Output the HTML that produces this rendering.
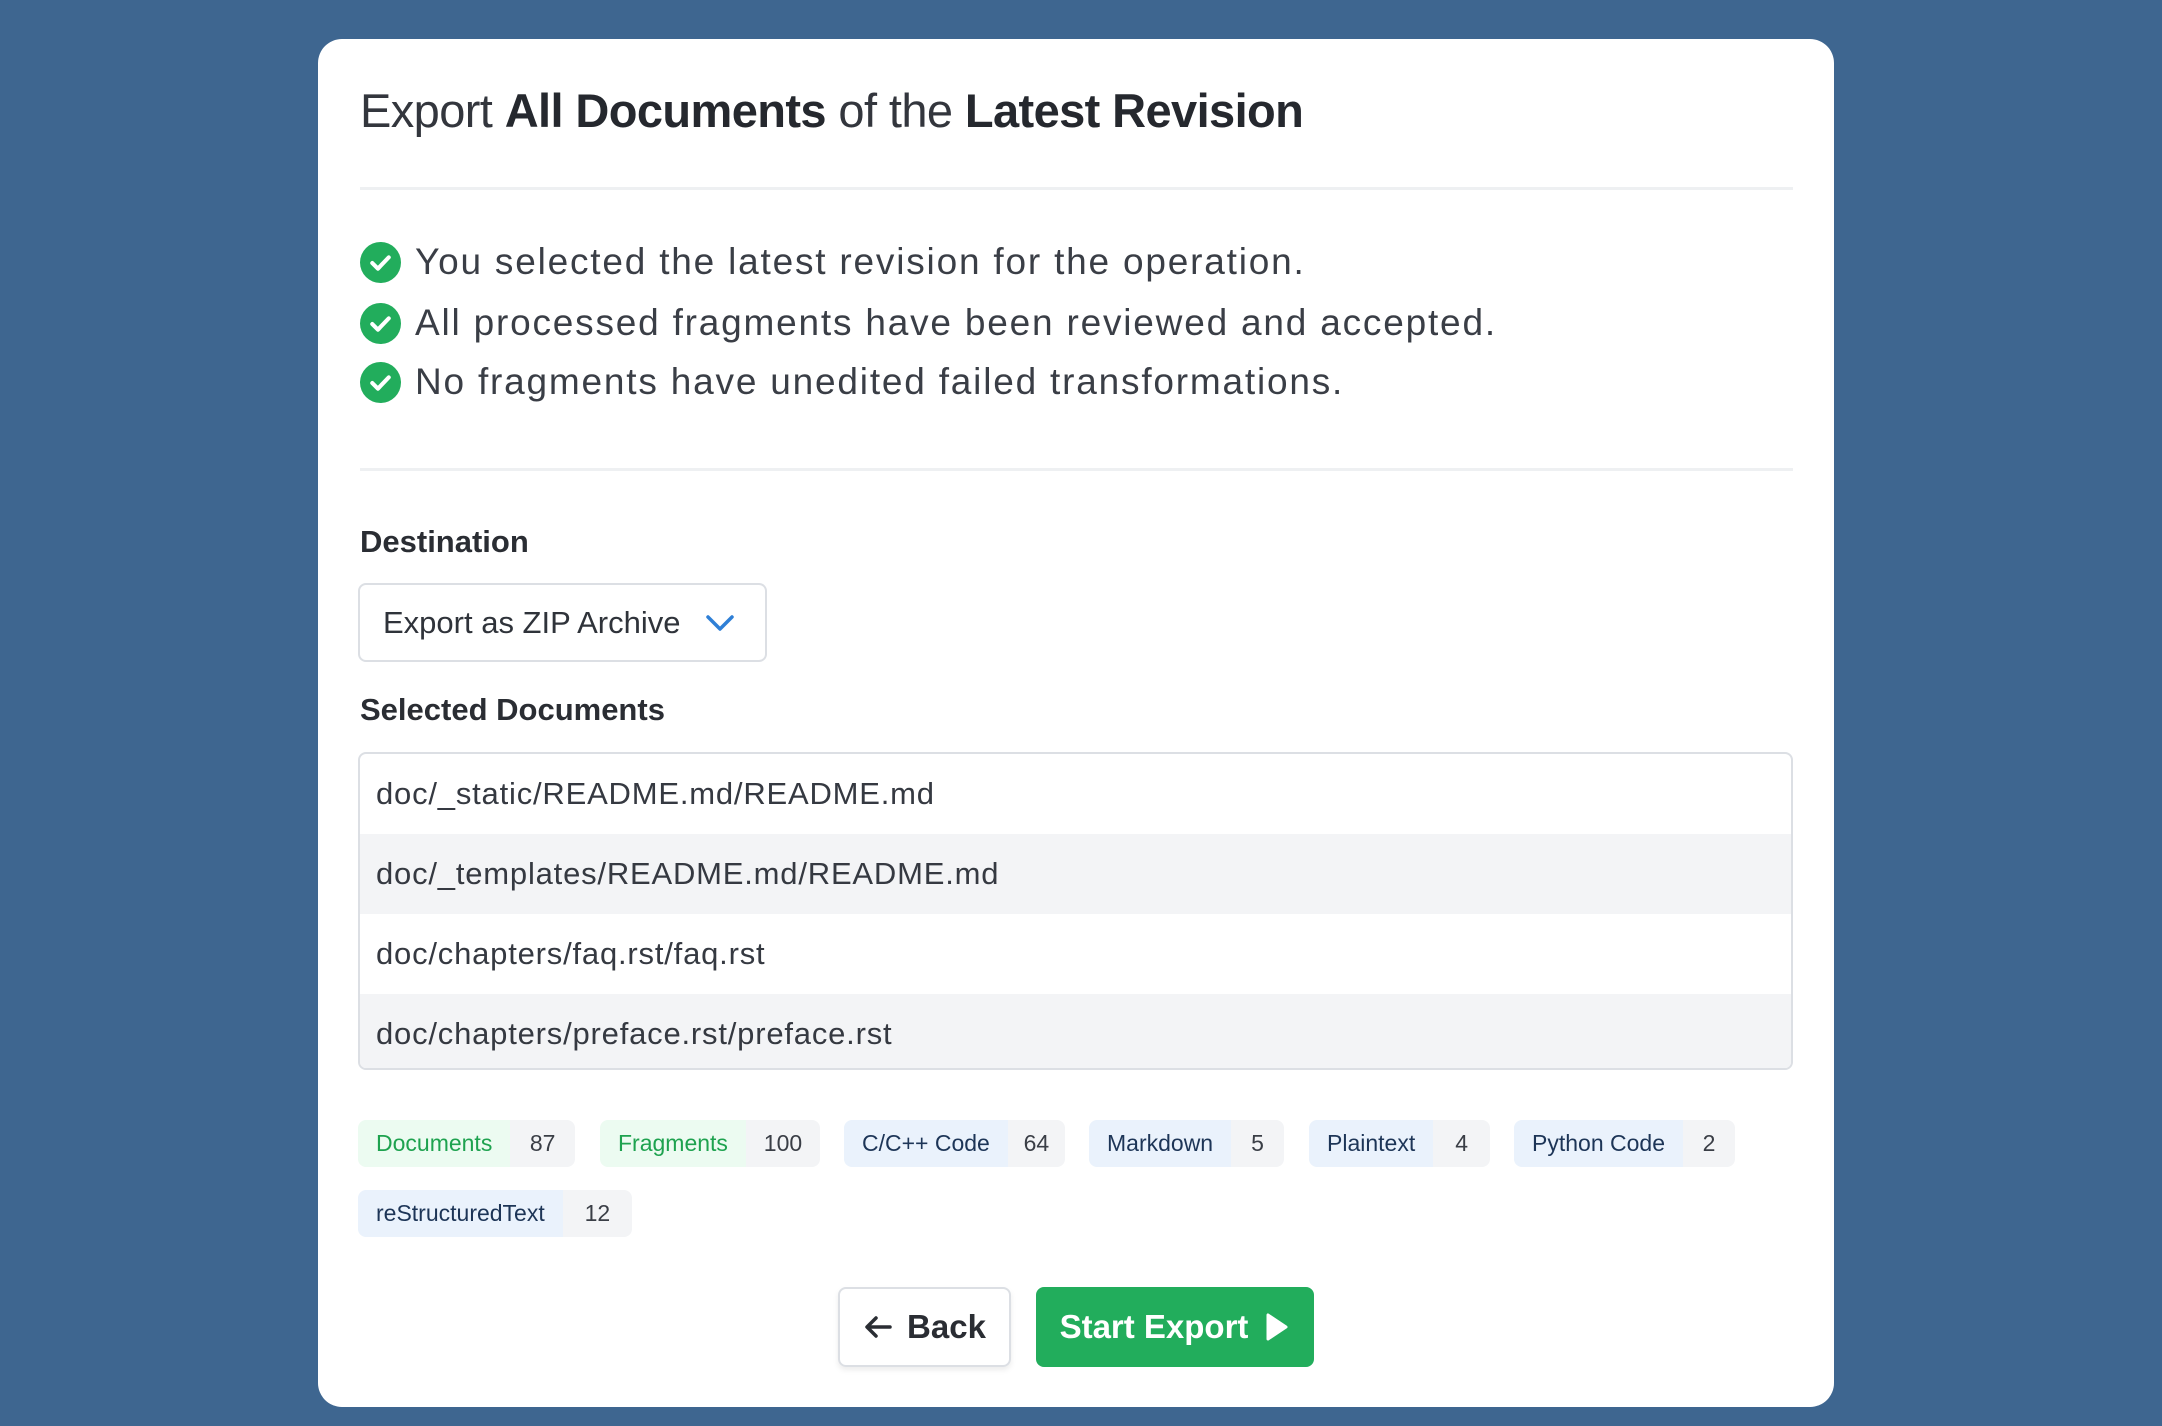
<!DOCTYPE html>
<html><head><meta charset="utf-8"><style>
*{margin:0;padding:0;box-sizing:border-box}
body{width:2162px;height:1426px;background:#3e6690;font-family:"Liberation Sans",sans-serif;color:#2d3139;position:relative;overflow:hidden}
.card{position:absolute;left:318px;top:39px;width:1516px;height:1368px;background:#fff;border-radius:24px}
.a{position:absolute;white-space:nowrap}
.title{left:42px;top:44px;font-size:47px;color:#33363d;letter-spacing:-0.6px}
.title b{color:#25282e}
.hr{position:absolute;left:42px;width:1433px;height:3px;background:#eef0f2}
.chk{left:42px;font-size:37px;color:#3a3e46;letter-spacing:1.8px;display:flex;align-items:center;height:50px}
.chk svg{margin-right:14px}
.lbl{left:42px;font-size:31px;font-weight:bold;color:#2a2d33}
.sel{left:40px;top:544px;width:409px;height:79px;border:2px solid #dcdfe4;border-radius:8px;font-size:31px;padding-left:23px;display:flex;align-items:center;color:#2f333a}
.list{left:40px;top:713px;width:1435px;height:318px;border:2px solid #dcdfe4;border-radius:8px;overflow:hidden}
.row{height:80px;display:flex;align-items:center;padding-left:16px;font-size:31px;color:#353941;letter-spacing:0.8px}
.row.g{background:#f3f4f6}
.tag{position:absolute;height:47px;border-radius:8px;display:flex;font-size:23px;overflow:hidden}
.tag span{display:flex;align-items:center;padding:0 18px}
.tag .n{background:#f3f4f6;color:#3a3e46;flex:1;justify-content:center;padding:0}
.gr span:first-child{background:#ecfbf1;color:#1ea24f}
.bl span:first-child{background:#eaf2fc;color:#1d3557}
.btn{position:absolute;top:1248px;height:80px;border-radius:8px;font-size:33px;font-weight:bold;display:flex;align-items:center;justify-content:center}
</style></head><body>
<div class="card">
<div class="a title">Export <b>All Documents</b> of the <b>Latest Revision</b></div>
<div class="hr" style="top:148px"></div>
<div class="a chk" style="top:198px"><svg width="41" height="41" viewBox="0 0 40 40"><circle cx="20" cy="20" r="20" fill="#22ad5c"/><path d="M12 20.5l5.5 5.5 10.5-11" stroke="#fff" stroke-width="4" fill="none" stroke-linecap="round" stroke-linejoin="round"/></svg>You selected the latest revision for the operation.</div>
<div class="a chk" style="top:259px"><svg width="41" height="41" viewBox="0 0 40 40"><circle cx="20" cy="20" r="20" fill="#22ad5c"/><path d="M12 20.5l5.5 5.5 10.5-11" stroke="#fff" stroke-width="4" fill="none" stroke-linecap="round" stroke-linejoin="round"/></svg>All processed fragments have been reviewed and accepted.</div>
<div class="a chk" style="top:318px"><svg width="41" height="41" viewBox="0 0 40 40"><circle cx="20" cy="20" r="20" fill="#22ad5c"/><path d="M12 20.5l5.5 5.5 10.5-11" stroke="#fff" stroke-width="4" fill="none" stroke-linecap="round" stroke-linejoin="round"/></svg>No fragments have unedited failed transformations.</div>
<div class="hr" style="top:429px"></div>
<div class="a lbl" style="top:485px">Destination</div>
<div class="a sel">Export as ZIP Archive<svg style="margin-left:24px" width="30" height="20" viewBox="0 0 30 20"><path d="M3 4l12 12 12-12" stroke="#2f7fd6" stroke-width="3.5" fill="none" stroke-linecap="round" stroke-linejoin="round"/></svg></div>
<div class="a lbl" style="top:653px">Selected Documents</div>
<div class="a list">
<div class="row">doc/_static/README.md/README.md</div>
<div class="row g">doc/_templates/README.md/README.md</div>
<div class="row">doc/chapters/faq.rst/faq.rst</div>
<div class="row g">doc/chapters/preface.rst/preface.rst</div>
</div>
<div class="tag gr" style="left:40px;top:1081px;width:217px"><span>Documents</span><span class="n">87</span></div>
<div class="tag gr" style="left:282px;top:1081px;width:220px"><span>Fragments</span><span class="n">100</span></div>
<div class="tag bl" style="left:526px;top:1081px;width:221px"><span>C/C++ Code</span><span class="n">64</span></div>
<div class="tag bl" style="left:771px;top:1081px;width:195px"><span>Markdown</span><span class="n">5</span></div>
<div class="tag bl" style="left:991px;top:1081px;width:181px"><span>Plaintext</span><span class="n">4</span></div>
<div class="tag bl" style="left:1196px;top:1081px;width:221px"><span>Python Code</span><span class="n">2</span></div>
<div class="tag bl" style="left:40px;top:1151px;width:274px"><span>reStructuredText</span><span class="n">12</span></div>
<div class="btn" style="left:520px;width:173px;border:2px solid #dcdfe4;color:#2a2d33;box-shadow:0 3px 6px rgba(0,0,0,.08)"><svg width="30" height="26" viewBox="0 0 30 26" style="margin-right:14px"><path d="M27 13H5M13 4l-9 9 9 9" stroke="#2a2d33" stroke-width="3.5" fill="none" stroke-linecap="round" stroke-linejoin="round"/></svg>Back</div>
<div class="btn" style="left:718px;width:278px;background:#22ad5c;color:#fff">Start Export<svg width="26" height="30" viewBox="0 0 26 30" style="margin-left:16px"><path d="M4 3v24l18-12z" fill="#fff" stroke="#fff" stroke-width="3" stroke-linejoin="round"/></svg></div>
</div>
</body></html>
